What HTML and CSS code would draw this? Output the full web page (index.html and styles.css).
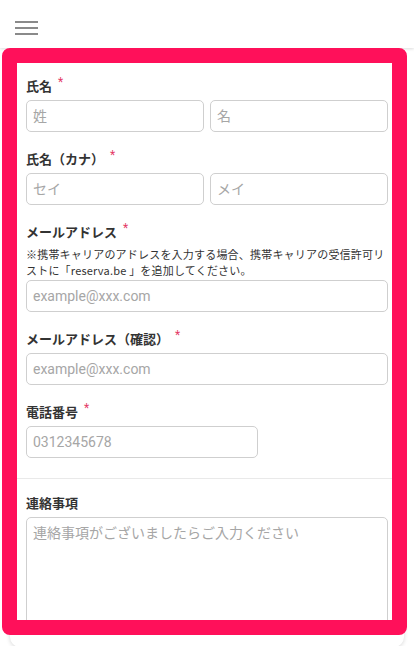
FILE: index.html
```html
<!DOCTYPE html>
<html lang="ja">
<head>
<meta charset="utf-8">
<link rel="stylesheet" href="styles.css">
</head>
<body>
<header class="header">
  <button class="menu" aria-label="menu">
    <span class="menu-line"></span>
    <span class="menu-line"></span>
    <span class="menu-line"></span>
  </button>
</header>
<main class="main">
  <section class="card">
    <div class="section">
      <div class="field">
        <div class="label">氏名<span class="req">*</span></div>
        <div class="pair">
          <input class="input" placeholder="姓">
          <input class="input" placeholder="名">
        </div>
      </div>
      <div class="field">
        <div class="label">氏名（カナ）<span class="req">*</span></div>
        <div class="pair">
          <input class="input" placeholder="セイ">
          <input class="input" placeholder="メイ">
        </div>
      </div>
      <div class="field">
        <div class="label">メールアドレス<span class="req">*</span></div>
        <p class="note">※携帯キャリアのアドレスを入力する場合、携帯キャリアの受信許可リストに「reserva.be 」を追加してください。</p>
        <input class="input full" placeholder="example@xxx.com">
      </div>
      <div class="field">
        <div class="label">メールアドレス（確認）<span class="req">*</span></div>
        <input class="input full" placeholder="example@xxx.com">
      </div>
      <div class="field last">
        <div class="label">電話番号<span class="req">*</span></div>
        <input class="input tel" placeholder="0312345678">
      </div>
    </div>
    <div class="section divided">
      <div class="field last">
        <div class="label">連絡事項</div>
        <textarea class="textarea" placeholder="連絡事項がございましたらご入力ください"></textarea>
      </div>
    </div>
  </section>
  <div class="highlight"></div>
</main>
</body>
</html>
```

FILE: styles.css
```css
* { box-sizing: border-box; }
html, body { margin: 0; padding: 0; }
body {
  width: 414px;
  height: 646px;
  overflow: hidden;
  background: #ffffff;
  font-family: Roboto, "Noto Sans CJK JP", sans-serif;
  color: #333;
}
.header {
  height: 48px;
  background: #fff;
  box-shadow: 0 1px 3px rgba(0,0,0,0.14);
  display: flex;
  align-items: center;
  padding-left: 15px;
  position: relative;
  z-index: 1;
}
.menu {
  border: 0;
  background: none;
  padding: 0;
  width: 23px;
  display: flex;
  flex-direction: column;
  gap: 4px;
  margin-top: 7px;
}
.menu-line {
  display: block;
  height: 2px;
  width: 23px;
  background: #8a8a8a;
}
.main {
  position: relative;
  padding: 8px 10px 0;
}
.card {
  background: #fff;
  border-radius: 10px;
  box-shadow: 0 1px 4px rgba(0,0,0,0.16);
}
.section {
  padding: 20px 16px 20px;
}
.divided {
  border-top: 1px solid #e9e9e9;
  padding-top: 14px;
}
.field { margin-bottom: 17px; }
.field.last { margin-bottom: 0; }
.label {
  font-family: "Noto Sans CJK JP", sans-serif;
  font-weight: 700;
  font-size: 13px;
  line-height: 20px;
  color: #333;
  margin-bottom: 4px;
}
.req {
  display: inline-block;
  vertical-align: top;
  margin-left: 6px;
  font-size: 12px;
  line-height: 12px;
  color: #e43a66;
  font-weight: 400;
  font-family: Roboto, sans-serif;
}
.note {
  margin: 0 0 2px;
  font-family: "Noto Sans CJK JP", sans-serif;
  font-size: 11px;
  letter-spacing: 0.2px;
  line-height: 16px;
  color: #333;
}
.pair {
  display: flex;
  gap: 6px;
}
.input {
  display: block;
  height: 32px;
  border: 1px solid #cfcfcf;
  border-radius: 5px;
  padding: 0 6px;
  font-family: Roboto, "Noto Sans CJK JP", sans-serif;
  font-size: 14px;
  color: #333;
  background: #fff;
  min-width: 0;
  flex: 1;
  outline: none;
}
.input.full { width: 100%; }
.input.tel { width: 64%; }
.input::placeholder,
.textarea::placeholder { color: #a6a6a6; }
.textarea {
  display: block;
  width: 100%;
  height: 110px;
  border: 1px solid #cfcfcf;
  border-radius: 5px;
  padding: 5px 6px;
  font-family: Roboto, "Noto Sans CJK JP", sans-serif;
  font-size: 14px;
  line-height: 20px;
  resize: none;
  outline: none;
}
.highlight {
  position: absolute;
  left: 2px;
  top: 0;
  width: 405px;
  height: 587px;
  border: 15px solid #ff105a;
  border-radius: 8px;
  pointer-events: none;
  z-index: 2;
}
```
